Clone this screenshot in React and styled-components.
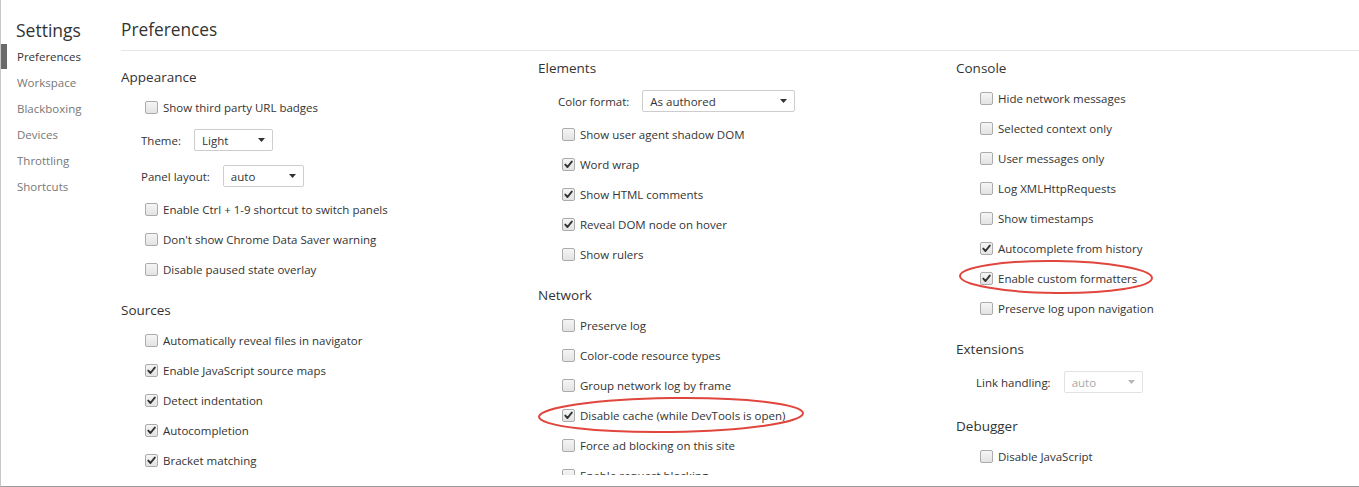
import React from 'react';
import styled, { createGlobalStyle } from 'styled-components';

const Global = createGlobalStyle`
  html, body { margin: 0; padding: 0; background: #fff; }
  body { font-family: "Open Sans", "Noto Sans", sans-serif; }
`;

const Frame = styled.div`
  position: relative;
  width: 1359px;
  height: 487px;
  box-sizing: border-box;
  border-left: 1px solid #c8c8c8;
  border-bottom: 1px solid #9b9b9b;
  display: flex;
  overflow: hidden;
  background: #fff;
  font-family: "Open Sans", "Noto Sans", sans-serif;
  color: #333;
`;

const Sidebar = styled.nav`
  width: 120px;
  flex: none;
  padding-top: 18px;
  box-sizing: border-box;
`;

const SideTitle = styled.div`
  font-size: 17.5px;
  line-height: 24px;
  padding-left: 15px;
  margin-bottom: 2px;
  color: #333;
`;

const SideItem = styled.div`
  position: relative;
  height: 26px;
  line-height: 26px;
  padding-left: 16px;
  font-size: 11.5px;
  color: ${(p) => (p.$active ? '#333' : '#777')};
  &::before {
    content: '';
    display: ${(p) => (p.$active ? 'block' : 'none')};
    position: absolute;
    left: 0;
    top: 0;
    width: 6px;
    height: 25px;
    background: #6a6a6a;
  }
`;

const Main = styled.main`
  flex: 1;
  display: flex;
  flex-direction: column;
  min-width: 0;
`;

const Header = styled.header`
  height: 51px;
  box-sizing: border-box;
  padding-top: 18px;
  border-bottom: 1px solid #e6e6e6;
  font-size: 17.3px;
  line-height: 24px;
  color: #333;
`;

const Scroller = styled.div`
  flex: 1;
  margin-bottom: 11px;
  overflow: hidden;
  display: grid;
  grid-template-columns: 417px 418px 1fr;
  align-items: start;
`;

const Column = styled.div`
  padding-top: ${(p) => p.$top}px;
`;

const Section = styled.section`
  margin-bottom: 16px;
`;

const Heading = styled.h3`
  margin: 0 0 5px 0;
  font-size: 13.5px;
  line-height: 20px;
  font-weight: normal;
  color: #333;
`;

const CheckRow = styled.label`
  display: flex;
  align-items: center;
  height: 30px;
  padding-left: 24px;
  font-size: 11.5px;
  color: #333;
  white-space: nowrap;
`;

const Box = styled.span`
  width: 13px;
  height: 13px;
  box-sizing: border-box;
  border: 1px solid #ababab;
  border-radius: 2px;
  background: linear-gradient(#f5f5f5, #e3e3e3);
  margin-right: 5px;
  display: flex;
  align-items: center;
  justify-content: center;
  flex: none;
`;

const FieldRow = styled.div`
  display: flex;
  align-items: center;
  height: 36px;
  padding-left: 20px;
  font-size: 11.5px;
  color: #333;
  white-space: nowrap;
`;

const FieldLabel = styled.span`
  margin-right: 13px;
`;

const SelectBox = styled.div`
  width: ${(p) => p.$w}px;
  height: 22px;
  box-sizing: border-box;
  border: 1px solid ${(p) => (p.$disabled ? '#e2e2e2' : '#cdcdcd')};
  border-radius: 2px;
  background: #fff;
  display: flex;
  align-items: center;
  justify-content: space-between;
  padding: 0 7px 0 7px;
  color: ${(p) => (p.$disabled ? '#a8a8a8' : '#333')};
`;

const Overlay = styled.svg`
  position: absolute;
  left: 0;
  top: 0;
  pointer-events: none;
`;

const Check = ({ on }) => (
  <Box>
    {on && (
      <svg width="9" height="9" viewBox="0 0 9 9">
        <path d="M1.3 4.6 L3.5 7 L7.8 1.6" fill="none" stroke="#333" strokeWidth="1.9" strokeLinecap="round" strokeLinejoin="round" />
      </svg>
    )}
  </Box>
);

const Arrow = ({ disabled }) => (
  <svg width="7" height="4" viewBox="0 0 7 4">
    <path d="M0 0 H7 L3.5 4 Z" fill={disabled ? '#b5b5b5' : '#333'} />
  </svg>
);

const c = (label, on = false) => ({ type: 'check', label, on });
const s = (label, value, w, disabled = false) => ({ type: 'select', label, value, w, disabled });

const columns = [
  {
    top: 16,
    sections: [
      {
        title: 'Appearance',
        items: [
          c('Show third party URL badges'),
          s('Theme:', 'Light', 79),
          s('Panel layout:', 'auto', 81),
          c('Enable Ctrl + 1-9 shortcut to switch panels'),
          c("Don't show Chrome Data Saver warning"),
          c('Disable paused state overlay'),
        ],
      },
      {
        title: 'Sources',
        items: [
          c('Automatically reveal files in navigator'),
          c('Enable JavaScript source maps', true),
          c('Detect indentation', true),
          c('Autocompletion', true),
          c('Bracket matching', true),
        ],
      },
    ],
  },
  {
    top: 7,
    sections: [
      {
        title: 'Elements',
        items: [
          s('Color format:', 'As authored', 153),
          c('Show user agent shadow DOM'),
          c('Word wrap', true),
          c('Show HTML comments', true),
          c('Reveal DOM node on hover', true),
          c('Show rulers'),
        ],
      },
      {
        title: 'Network',
        items: [
          c('Preserve log'),
          c('Color-code resource types'),
          c('Group network log by frame'),
          c('Disable cache (while DevTools is open)', true),
          c('Force ad blocking on this site'),
          c('Enable request blocking'),
        ],
      },
    ],
  },
  {
    top: 7,
    sections: [
      {
        title: 'Console',
        items: [
          c('Hide network messages'),
          c('Selected context only'),
          c('User messages only'),
          c('Log XMLHttpRequests'),
          c('Show timestamps'),
          c('Autocomplete from history', true),
          c('Enable custom formatters', true),
          c('Preserve log upon navigation'),
        ],
      },
      {
        title: 'Extensions',
        items: [s('Link handling:', 'auto', 79, true)],
      },
      {
        title: 'Debugger',
        items: [c('Disable JavaScript')],
      },
    ],
  },
];

const navItems = ['Preferences', 'Workspace', 'Blackboxing', 'Devices', 'Throttling', 'Shortcuts'];

export default function App() {
  return (
    <>
      <Global />
      <Frame>
        <Sidebar>
          <SideTitle>Settings</SideTitle>
          {navItems.map((n, i) => (
            <SideItem key={n} $active={i === 0}>
              {n}
            </SideItem>
          ))}
        </Sidebar>
        <Main>
          <Header>Preferences</Header>
          <Scroller>
            {columns.map((col, ci) => (
              <Column key={ci} $top={col.top}>
                {col.sections.map((sec) => (
                  <Section key={sec.title}>
                    <Heading>{sec.title}</Heading>
                    {sec.items.map((it) =>
                      it.type === 'check' ? (
                        <CheckRow key={it.label}>
                          <Check on={it.on} />
                          {it.label}
                        </CheckRow>
                      ) : (
                        <FieldRow key={it.label}>
                          <FieldLabel>{it.label}</FieldLabel>
                          <SelectBox $w={it.w} $disabled={it.disabled}>
                            <span>{it.value}</span>
                            <Arrow disabled={it.disabled} />
                          </SelectBox>
                        </FieldRow>
                      )
                    )}
                  </Section>
                ))}
              </Column>
            ))}
          </Scroller>
        </Main>
        <Overlay width="1359" height="487" viewBox="0 0 1359 487">
          <ellipse cx="670" cy="415" rx="132" ry="17" fill="none" stroke="#e0463d" strokeWidth="2" transform="rotate(-0.8 670 415)" />
          <ellipse cx="1055" cy="277" rx="96" ry="16" fill="none" stroke="#e0463d" strokeWidth="2" transform="rotate(0.6 1055 277)" />
        </Overlay>
      </Frame>
    </>
  );
}
